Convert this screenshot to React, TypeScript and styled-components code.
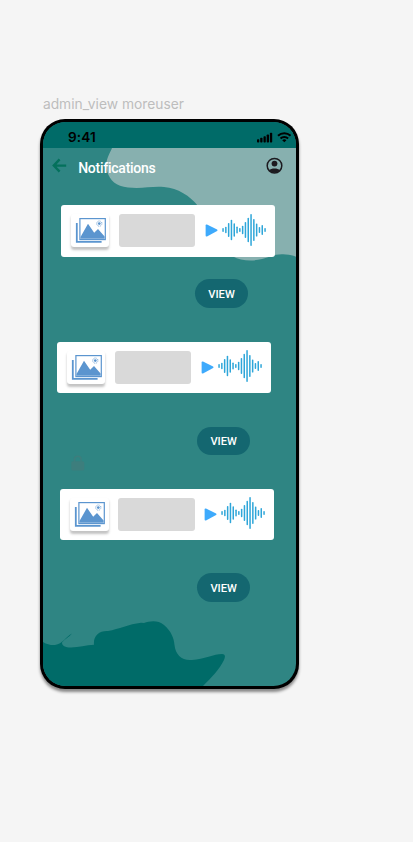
import React from "react";
import styled, { createGlobalStyle } from "styled-components";

const GlobalStyle = createGlobalStyle`
  * { box-sizing: border-box; }
  body { margin: 0; background: #f5f5f5; }
`;

const Canvas = styled.main`
  min-height: 842px;
  padding: 95px 0 0 40.4px;
  background: #f5f5f5;
`;

const FrameLabel = styled.div`
  height: 24.4px;
  padding-left: 2.5px;
  font: 400 13.8px/19px Inter, sans-serif;
  color: #bdbdbd;
  white-space: nowrap;
`;

const Phone = styled.section`
  width: 258.2px;
  height: 569.6px;
  padding: 2.6px;
  border-radius: 25px;
  background: #000;
  box-shadow: 0 3px 3px rgba(0, 0, 0, 0.45);
`;

const Screen = styled.div`
  position: relative;
  display: flex;
  flex-direction: column;
  width: 253px;
  height: 564.4px;
  border-radius: 22.5px;
  overflow: hidden;
  background: #2f8583;
`;

const Backdrop = styled.svg`
  position: absolute;
  inset: 0;
`;

const StatusBar = styled.div`
  position: relative;
  display: flex;
  justify-content: space-between;
  height: 26.4px;
  padding: 6px 5px 0 25px;
  background: #006b68;
`;

const Clock = styled.span`
  font: 600 13.6px/19px Inter, sans-serif;
  letter-spacing: 0.15px;
  color: #000;
`;

const StatusIcons = styled.svg`
  display: block;
  margin-top: 3px;
`;

const TopBar = styled.header`
  position: relative;
  display: flex;
  height: 56.9px;
  padding: 8px 13.4px 0 9px;
`;

const BackIcon = styled.svg`
  display: block;
  margin-top: 2px;
`;

const Title = styled.h1`
  flex: 1;
  margin: 2px 0 0 11.2px;
  font: 500 14px/20px Roboto, sans-serif;
  letter-spacing: -0.25px;
  color: #fff;
`;

const Avatar = styled.svg`
  display: block;
  margin-top: 1px;
`;

const Item = styled.article<{ $height: number }>`
  position: relative;
  height: ${(p) => p.$height}px;
`;

const Card = styled.div<{ $left: number }>`
  display: flex;
  width: 214px;
  height: 51.5px;
  margin-left: ${(p) => p.$left}px;
  padding: 8.7px 0 0 10.1px;
  border-radius: 3px;
  background: #fff;

  > * {
    flex-shrink: 0;
  }
`;

const Tile = styled.div`
  width: 38.2px;
  height: 33.2px;
  padding: 3.4px 0 0 4px;
  border-radius: 3px;
  background: #fff;
  box-shadow: 0 2.5px 2.5px rgba(0, 0, 0, 0.24);
`;

const Placeholder = styled.div`
  width: 76.8px;
  height: 33px;
  margin-left: 9.3px;
  border-radius: 3px;
  background: #d9d9d9;
`;

const Play = styled.svg`
  display: block;
  margin: 10.5px 0 0 9.2px;
`;

const Wave = styled.svg`
  display: block;
  margin: -1.4px 0 0 4.2px;
`;

const ViewButton = styled.button<{ $left: number; $top: number }>`
  display: block;
  width: 53px;
  height: 28.6px;
  margin: ${(p) => p.$top}px 0 0 ${(p) => p.$left}px;
  padding: 1.6px 0 0;
  border: 0;
  border-radius: 15px;
  background: #146770;
  color: #fff;
  font: 500 11.2px/27px Roboto, sans-serif;
`;

const LockMark = styled.svg`
  position: absolute;
  left: 28.5px;
  top: -34px;
`;

const PictureIcon = () => (
  <svg width="32" height="28" viewBox="0 0 32 28" fill="none" display="block">
    <path d="M1.8 6v18.8h24.8" stroke="#5b95cf" strokeWidth="1.8" />
    <rect x="4.9" y="1.6" width="25.4" height="21" fill="#fff" stroke="#5b95cf" strokeWidth="1.2" />
    <path d="M5.5 21.8V20L13 6.8l6.2 9 3.8-3.8 6.6 7.6v2.2z" fill="#5b95cf" />
    <circle cx="24.3" cy="6.6" r="1.35" fill="#5b95cf" />
    <circle cx="24.3" cy="6.6" r="2.6" stroke="#5b95cf" strokeWidth="1" strokeDasharray="0.9 1.14" />
  </svg>
);

const bars = [2, 3.3, 7, 10.3, 6.7, 3.4, 1.9, 4.2, 8, 12.3, 16, 11, 6.6, 3, 5, 2];

const Waveform = () => (
  <Wave width="46" height="34" viewBox="0 0 46 34">
    {bars.map((half, i) => (
      <rect key={i} x={0.3 + i * 2.8} y={17 - half} width="1.5" height={half * 2} rx="0.7" fill="#2ea6d9" />
    ))}
  </Wave>
);

const entries = [
  { height: 136.7, card: 18, top: 22.7, button: 152, locked: false },
  { height: 146.9, card: 14, top: 33.2, button: 154.2, locked: false },
  { height: 120, card: 17.3, top: 33, button: 154.2, locked: true },
];

export default function App() {
  return (
    <>
      <GlobalStyle />
      <Canvas>
        <FrameLabel>admin_view moreuser</FrameLabel>
        <Phone>
          <Screen>
            <Backdrop width="253" height="565" viewBox="43 122 253 565">
              <path
                d="M112 148C110 153 104 162 107 171C110 181 116 186 128 187.4C142 189 151 186 164 187C178 188 190 196 198 206C212 224 213 248 233 256.5C240 260.5 252 261.7 262 259C270 257 274 254 283 254.3C288 254.4 293 255.5 296 256.8V148Z"
                fill="#87b0af"
              />
              <path
                d="M43 642C47 644.5 51 645.3 55 645C63 644 65 637 72 633.5C69 637 65 639 62 642.5C62 646 65 647.5 71 647.5C79 647.5 86 645 94 644.8C93 636 99 630.5 108 631C119 629 129 624 141 622.7L144 623C150 621 158 620 164 625C171 631 174 638 174.5 645C175.5 655 182 661 192 660C204 659 214 654 222 654C225.5 654.2 225.5 656.5 224 660C219 670 211 678 202 687H43Z"
                fill="#006b68"
              />
            </Backdrop>
            <StatusBar>
              <Clock>9:41</Clock>
              <StatusIcons width="34" height="13" viewBox="0 0 34 13">
                <rect x="0" y="8.2" width="2.3" height="3.2" rx=".7" />
                <rect x="3.2" y="6.8" width="2.3" height="4.6" rx=".7" />
                <rect x="6.5" y="5.2" width="2.3" height="6.2" rx=".7" />
                <rect x="9.7" y="3.5" width="2.3" height="7.9" rx=".7" />
                <rect x="12.9" y="1.7" width="2.3" height="9.7" rx=".7" />
                <g fill="none" stroke="#000" strokeWidth="2">
                  <path d="M21 4.7a9 9 0 0 1 12.6 0" />
                  <path d="M23.5 7.5a5.4 5.4 0 0 1 7.6 0" />
                </g>
                <path d="M25.2 9.2a3 3 0 0 1 4.2 0l-2.1 2.1z" />
              </StatusIcons>
            </StatusBar>
            <TopBar>
              <BackIcon width="15" height="15" viewBox="0 0 15 15" fill="none">
                <path d="M7.6 1.4L1.8 7.6l5.8 6M2 7.6h12.2" stroke="#04715c" strokeWidth="2.4" />
              </BackIcon>
              <Title>Notifications</Title>
              <Avatar width="17" height="17" viewBox="0 0 17 17">
                <circle cx="8.5" cy="8.7" r="7.3" fill="none" stroke="#1d1b20" strokeWidth="1.5" />
                <circle cx="8.5" cy="6.6" r="2.9" fill="#1d1b20" />
                <path d="M3.1 13.2C5.3 10.9 11.7 10.9 13.9 13.2C11.4 16.5 5.6 16.5 3.1 13.2Z" fill="#1d1b20" />
              </Avatar>
            </TopBar>
            {entries.map((entry, i) => (
              <Item key={i} $height={entry.height}>
                {entry.locked && (
                  <LockMark width="14" height="16" viewBox="0 0 14 16">
                    <rect x="0.3" y="6.2" width="13" height="9.3" rx="1.6" fill="#3d7e7d" />
                    <path d="M3.5 7V4.5a3.3 3.3 0 0 1 6.6 0V7" fill="none" stroke="#3d7e7d" strokeWidth="1.5" />
                  </LockMark>
                )}
                <Card $left={entry.card}>
                  <Tile>
                    <PictureIcon />
                  </Tile>
                  <Placeholder />
                  <Play width="13" height="13" viewBox="0 0 13 13">
                    <path d="M.6 1.5Q.6.1 2 .5L12.1 5.5Q13 6.3 12.1 7L2 12.4Q.6 12.8.6 11.4Z" fill="#3eaafc" />
                  </Play>
                  <Waveform />
                </Card>
                <ViewButton $left={entry.button} $top={entry.top}>VIEW</ViewButton>
              </Item>
            ))}
          </Screen>
        </Phone>
      </Canvas>
    </>
  );
}
